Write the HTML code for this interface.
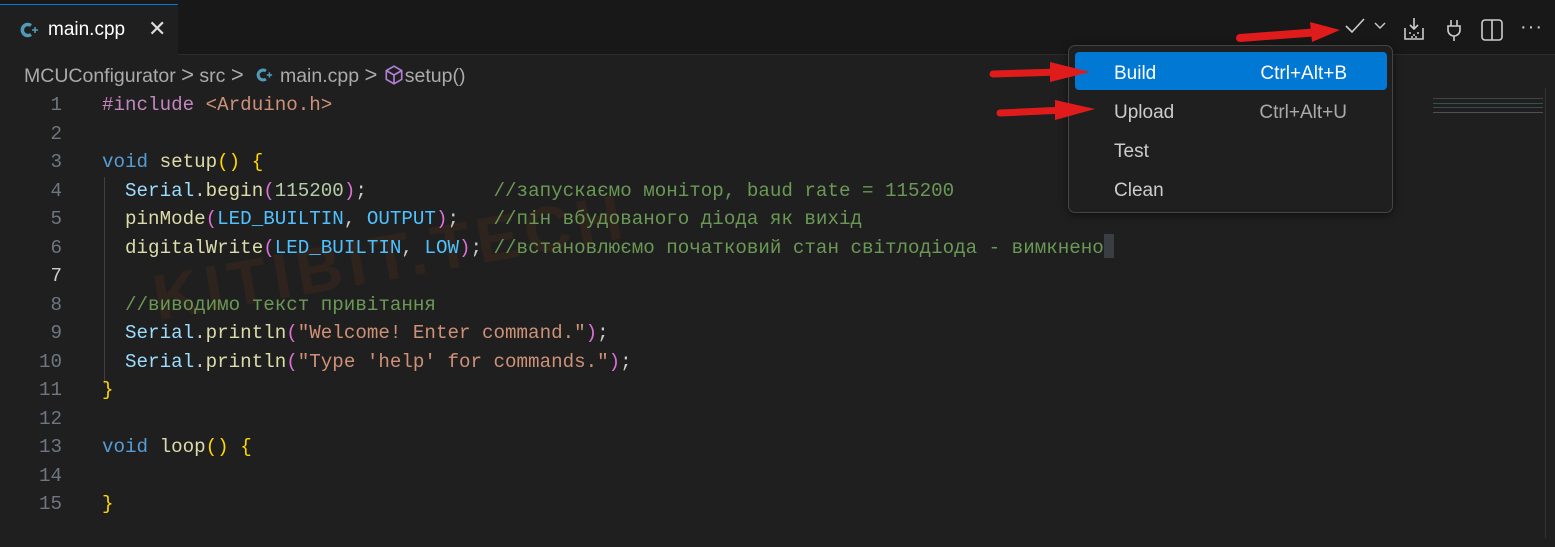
<!DOCTYPE html>
<html><head><meta charset="utf-8"><style>
body{margin:0;width:1555px;height:538px;background:#1f1f1f;overflow:hidden;position:relative;font-family:"Liberation Sans","DejaVu Sans",sans-serif}
.tabbar{position:absolute;left:0;top:0;width:1555px;height:55px;background:#181818;border-bottom:1px solid #2b2b2b;box-sizing:border-box}
.tab{position:absolute;left:0;top:4px;width:178px;height:51px;background:#1f1f1f;border-top:1px solid #0078d4;box-sizing:border-box}
.tab .n{position:absolute;left:48px;top:14px;color:#fff;font-size:19px}
.tab .x{position:absolute;left:148px;top:11px;color:#ddd;font-size:22px}
.bc{position:absolute;top:62px;left:24px;color:#ababab;font-size:19.5px;white-space:pre}
.bc .ch{font-size:22px;color:#aaa}
.code{position:absolute;left:0;top:91px;font-family:"Liberation Mono",monospace;font-size:19.2px;line-height:28.5px;white-space:pre}
.ln{position:absolute;left:0;width:62px;text-align:right;color:#6e7681}
.tx{position:absolute;left:102px}
.k{color:#569cd6}.f{color:#dcdcaa}.v{color:#9cdcfe}.n2{color:#b5cea8}.c{color:#6a9955}.s{color:#ce9178}.m{color:#4fc1ff}.p{color:#c586c0}.y{color:#ffd700}.pu{color:#da70d6}.w{color:#cccccc}
.guide{position:absolute;left:104px;width:1px;background:#404040}
.menu{position:absolute;left:1068px;top:45px;width:325px;height:168px;background:#1f1f1f;border:1px solid #454545;border-radius:7px;box-sizing:border-box;box-shadow:0 2px 8px rgba(0,0,0,.5)}
.it{position:absolute;left:6px;width:312px;height:38px;border-radius:4px;color:#ccc;font-size:19px}
.it span{position:absolute;top:11px}
.it .l{left:39px}.it .r{right:40px}
.ic{position:absolute;top:14px}
</style></head><body>
<div class="tabbar">
 <div class="tab">
  <svg style="position:absolute;left:20px;top:16px" width="20" height="18" viewBox="0 0 20 18"><path d="M11 4.5A5.5 5.5 0 1 0 11 13.5" stroke="#519aba" stroke-width="3.5" fill="none"/><path d="M12 9h6M15 6v6" stroke="#519aba" stroke-width="1.6"/></svg>
  <span class="n">main.cpp</span><span class="x">✕</span>
 </div>
 <svg class="ic" style="left:1343px" width="24" height="24" viewBox="0 0 24 24"><path d="M3 12l6 6L21 5" stroke="#ccc" stroke-width="1.6" fill="none"/></svg>
 <svg class="ic" style="left:1373px;top:20px" width="14" height="12" viewBox="0 0 14 12"><path d="M2 3l5 5 5-5" stroke="#ccc" stroke-width="1.4" fill="none"/></svg>
 <svg class="ic" style="left:1402px;top:16px" width="24" height="26" viewBox="0 0 24 26"><path d="M12 2v11M8 9l4 4 4-4M3 12v11h18V12" stroke="#ccc" stroke-width="1.6" fill="none"/><circle cx="8" cy="17" r="1" fill="#ccc"/><circle cx="12" cy="19" r="1" fill="#ccc"/><circle cx="16" cy="17" r="1" fill="#ccc"/><circle cx="10" cy="21" r="1" fill="#ccc"/><circle cx="14" cy="21" r="1" fill="#ccc"/></svg>
 <svg class="ic" style="left:1444px;top:18px" width="20" height="24" viewBox="0 0 20 24"><path d="M7 2v6M13 2v6M4 8h12v4a6 6 0 0 1-12 0zM10 18v5" stroke="#ccc" stroke-width="1.6" fill="none"/></svg>
 <svg class="ic" style="left:1480px;top:18px" width="24" height="24" viewBox="0 0 24 24"><rect x="2" y="2" width="20" height="20" rx="3" stroke="#ccc" stroke-width="1.6" fill="none"/><path d="M12 2v20" stroke="#ccc" stroke-width="1.6"/></svg>
 <span style="position:absolute;left:1520px;top:16px;color:#ccc;font-size:20px;letter-spacing:1px">···</span>
</div>
<div class="bc">MCUConfigurator <span class="ch">&gt;</span> src <span class="ch">&gt;</span>  <svg width="20" height="16" viewBox="0 0 20 18" style="vertical-align:-1px"><path d="M11 4.5A5.5 5.5 0 1 0 11 13.5" stroke="#519aba" stroke-width="3.5" fill="none"/><path d="M12 9h6M15 6v6" stroke="#519aba" stroke-width="1.6"/></svg> main.cpp <span class="ch">&gt;</span> <svg width="22" height="22" viewBox="0 0 20 20" style="vertical-align:-4px"><path d="M10 2l7 4v8l-7 4-7-4V6zM3 6l7 4 7-4M10 10v8" stroke="#b180d7" stroke-width="1.5" fill="none"/></svg>setup()</div>
<div style="position:absolute;left:150px;top:220px;font-family:'Liberation Sans',sans-serif;font-weight:bold;font-size:64px;color:rgba(120,60,20,0.18);transform:rotate(-10deg);letter-spacing:6px">KITIBIT.TECH</div>
<div class="guide" style="top:177px;height:207px"></div>
<div class="code">
<div class="ln" style="top:0">1</div><div class="tx" style="top:0"><span class="p">#include</span> <span class="s">&lt;Arduino.h&gt;</span></div>
<div class="ln" style="top:28.5px">2</div>
<div class="ln" style="top:57px">3</div><div class="tx" style="top:57px"><span class="k">void</span> <span class="f">setup</span><span class="y">()</span> <span class="y">{</span></div>
<div class="ln" style="top:85.5px">4</div><div class="tx" style="top:85.5px">  <span class="v">Serial</span><span class="w">.</span><span class="f">begin</span><span class="pu">(</span><span class="n2">115200</span><span class="pu">)</span><span class="w">;</span>           <span class="c">//запускаємо монітор, baud rate = 115200</span></div>
<div class="ln" style="top:114px">5</div><div class="tx" style="top:114px">  <span class="f">pinMode</span><span class="pu">(</span><span class="m">LED_BUILTIN</span><span class="w">, </span><span class="m">OUTPUT</span><span class="pu">)</span><span class="w">;</span>   <span class="c">//пін вбудованого діода як вихід</span></div>
<div class="ln" style="top:142.5px">6</div><div class="tx" style="top:142.5px">  <span class="f">digitalWrite</span><span class="pu">(</span><span class="m">LED_BUILTIN</span><span class="w">, </span><span class="m">LOW</span><span class="pu">)</span><span class="w">;</span> <span class="c">//встановлюємо початковий стан світлодіода - вимкнено</span><span style="display:inline-block;width:10px;height:24px;background:#3a3d41;vertical-align:-5px"></span></div>
<div class="ln" style="top:171px;color:#ccc">7</div>
<div class="ln" style="top:199.5px">8</div><div class="tx" style="top:199.5px">  <span class="c">//виводимо текст привітання</span></div>
<div class="ln" style="top:228px">9</div><div class="tx" style="top:228px">  <span class="v">Serial</span><span class="w">.</span><span class="f">println</span><span class="pu">(</span><span class="s">"Welcome! Enter command."</span><span class="pu">)</span><span class="w">;</span></div>
<div class="ln" style="top:256.5px">10</div><div class="tx" style="top:256.5px">  <span class="v">Serial</span><span class="w">.</span><span class="f">println</span><span class="pu">(</span><span class="s">"Type 'help' for commands."</span><span class="pu">)</span><span class="w">;</span></div>
<div class="ln" style="top:285px">11</div><div class="tx" style="top:285px"><span class="y">}</span></div>
<div class="ln" style="top:313.5px">12</div>
<div class="ln" style="top:342px">13</div><div class="tx" style="top:342px"><span class="k">void</span> <span class="f">loop</span><span class="y">()</span> <span class="y">{</span></div>
<div class="ln" style="top:370.5px">14</div>
<div class="ln" style="top:399px">15</div><div class="tx" style="top:399px"><span class="y">}</span></div>
</div>
<div style="position:absolute;left:1545px;top:88px;width:1px;height:450px;background:#333"></div>
<div style="position:absolute;left:1433px;top:98px;width:110px;height:22px;opacity:.35;background:linear-gradient(#888 0 1px,transparent 1px 5px,#6a9 5px 6px,transparent 6px 9px,#69c 9px 10px,transparent 10px 14px,#aaa 14px 15px,transparent 15px)"></div>
<div class="menu">
 <div class="it" style="top:6px;background:#0078d4;color:#fff"><span class="l">Build</span><span class="r">Ctrl+Alt+B</span></div>
 <div class="it" style="top:45px"><span class="l">Upload</span><span class="r" style="color:#aaa">Ctrl+Alt+U</span></div>
 <div class="it" style="top:84px"><span class="l">Test</span></div>
 <div class="it" style="top:123px"><span class="l">Clean</span></div>
</div>
<svg style="position:absolute;left:0;top:0" width="1555" height="538">
 <path d="M1240 38 L1320 32" stroke="#e01b1b" stroke-width="8" stroke-linecap="round"/><path d="M1310 22 L1340 30 L1312 42 Z" fill="#e01b1b"/>
 <path d="M993 74 L1060 72" stroke="#e01b1b" stroke-width="7" stroke-linecap="round"/><path d="M1050 62 L1090 72 L1050 82 Z" fill="#e01b1b"/>
 <path d="M1000 113 L1065 110" stroke="#e01b1b" stroke-width="7" stroke-linecap="round"/><path d="M1055 100 L1095 109 L1055 120 Z" fill="#e01b1b"/>
</svg>
</body></html>
